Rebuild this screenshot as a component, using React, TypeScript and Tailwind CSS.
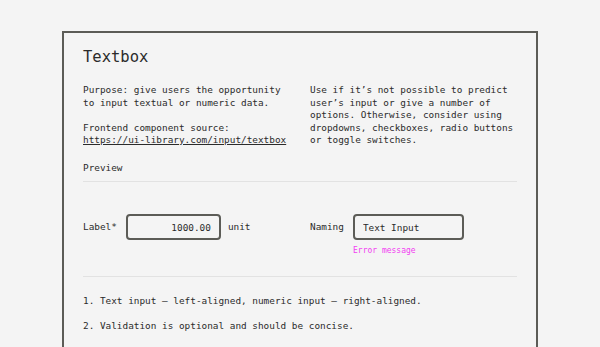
export default function App() {
  return (
    <div
      className="min-h-screen bg-[#f4f4f4] pt-[31px] text-[#2b2b2b]"
      style={{ fontFamily: '"DejaVu Sans Mono", "Liberation Mono", monospace' }}
    >
      <div className="mx-auto w-[476px] border-2 border-[#5c5c57] px-[19px] pt-[14px] pb-6">
        <h1 className="text-[15.5px] leading-[20px]">Textbox</h1>

        <div className="mt-[17px] grid grid-cols-[227px_1fr] text-[9.4px] leading-[12.5px]">
          <div>
            <p>
              Purpose: give users the opportunity
              <br />
              to input textual or numeric data.
            </p>
            <p className="mt-[12.5px]">
              Frontend component source:
              <br />
              <a href="#" className="underline">
                https://ui-library.com/input/textbox
              </a>
            </p>
          </div>
          <p>
            Use if it’s not possible to predict
            <br />
            user’s input or give a number of
            <br />
            options. Otherwise, consider using
            <br />
            dropdowns, checkboxes, radio buttons
            <br />
            or toggle switches.
          </p>
        </div>

        <p className="mt-[15.5px] text-[9.4px] leading-[12.5px]">Preview</p>
        <div className="mt-[6.5px] h-px bg-[#e2e2e2]" />

        <div className="mt-[32px] grid grid-cols-[227px_1fr] text-[9.4px] leading-[12.5px]">
          <div className="flex h-[26px] items-center">
            <span>Label*</span>
            <input
              readOnly
              defaultValue="1000.00"
              className="ml-[9px] h-[26px] w-[95px] rounded-[4px] border-2 border-[#5c5c57] bg-transparent pr-[8px] text-right outline-none"
            />
            <span className="ml-[7px]">unit</span>
          </div>
          <div>
            <div className="flex h-[26px] items-center">
              <span>Naming</span>
              <input
                readOnly
                defaultValue="Text Input"
                className="ml-[9px] h-[26px] w-[111px] rounded-[4px] border-2 border-[#5c5c57] bg-transparent pl-[8px] outline-none"
              />
            </div>
            <p className="ml-[43px] mt-[5.5px] text-[8px] leading-[10px] text-[#f23cf2]">Error message</p>
          </div>
        </div>

        <div className="mt-[20.5px] h-px bg-[#e2e2e2]" />

        <ol className="mt-[18px] flex flex-col gap-[12.5px] text-[9.4px] leading-[12.5px]">
          <li>1. Text input — left-aligned, numeric input — right-aligned.</li>
          <li>2. Validation is optional and should be concise.</li>
        </ol>
      </div>
    </div>
  )
}
